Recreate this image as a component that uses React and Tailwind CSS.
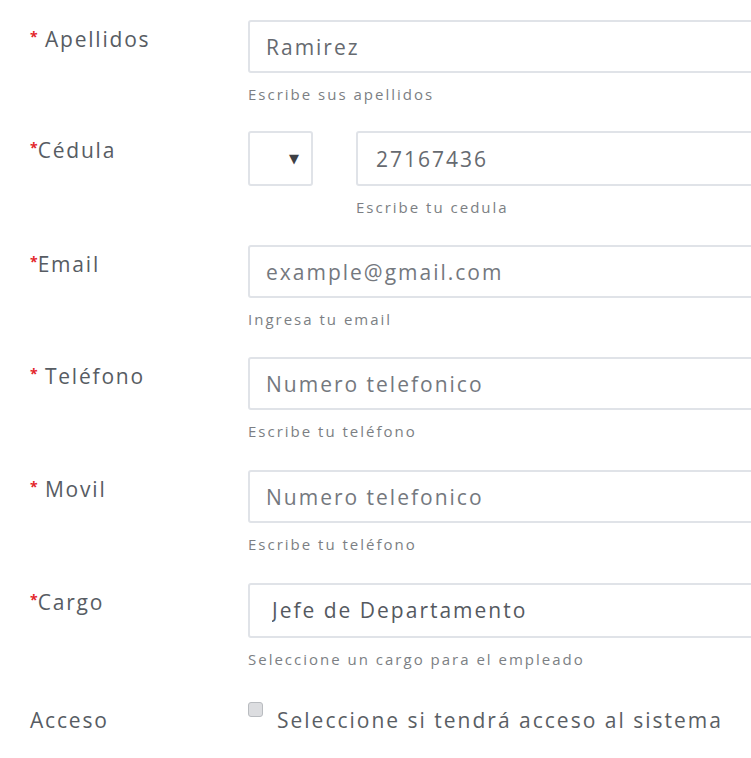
import React from 'react';

const font = { fontFamily: '"Open Sans", "DejaVu Sans", sans-serif' };

function Label({ text, required, spaced }) {
  return (
    <div className="w-[218px] shrink-0 pt-[5px] text-[21px] leading-[28px] tracking-[1.8px] text-[#575c63]">
      {required && (
        <span className="relative top-[-5px] text-[14px] font-bold text-[#e3262b] tracking-normal">*</span>
      )}
      {spaced ? ' ' : ''}
      {text}
    </div>
  );
}

function Help({ children }) {
  return (
    <div className="mt-[11px] text-[15px] leading-[21px] tracking-[2px] text-[#7c7f84]">{children}</div>
  );
}

const inputCls =
  'block w-full h-[53px] border-2 border-[#e0e3e8] rounded-[3px] bg-white px-[16px] text-[21px] tracking-[2px] text-[#666a70] placeholder:text-[#74787e] outline-none';

function Row({ children, className = '' }) {
  return <div className={`flex ${className}`}>{children}</div>;
}

export default function App() {
  return (
    <div className="w-[751px] h-[758px] overflow-hidden bg-white" style={font}>
      <div className="w-[800px] pl-[30px] pt-[20px]">
        <Row className="h-[111px]">
          <Label text="Apellidos" required spaced />
          <div className="flex-1">
            <input className={inputCls} defaultValue="Ramirez" readOnly />
            <Help>Escribe sus apellidos</Help>
          </div>
        </Row>

        <Row className="h-[114px]">
          <Label text="Cédula" required />
          <div className="flex-1 flex gap-[43px]">
            <div className="w-[65px] h-[55px] shrink-0 border-2 border-[#e0e3e8] rounded-[3px] flex items-center justify-end pr-[12px] text-[13px] text-[#3d4045]">
              ▼
            </div>
            <div className="flex-1">
              <input className={`${inputCls} h-[55px] px-[18px]`} defaultValue="27167436" readOnly />
              <Help>Escribe tu cedula</Help>
            </div>
          </div>
        </Row>

        <Row className="h-[112px]">
          <Label text="Email" required />
          <div className="flex-1">
            <input className={inputCls} placeholder="example@gmail.com" readOnly />
            <Help>Ingresa tu email</Help>
          </div>
        </Row>

        <Row className="h-[113px]">
          <Label text="Teléfono" required spaced />
          <div className="flex-1">
            <input className={inputCls} placeholder="Numero telefonico" readOnly />
            <Help>Escribe tu teléfono</Help>
          </div>
        </Row>

        <Row className="h-[113px]">
          <Label text="Movil" required spaced />
          <div className="flex-1">
            <input className={inputCls} placeholder="Numero telefonico" readOnly />
            <Help>Escribe tu teléfono</Help>
          </div>
        </Row>

        <Row className="h-[118px]">
          <Label text="Cargo" required />
          <div className="flex-1">
            <select className={`${inputCls} h-[55px] appearance-none px-[22px] text-[#55595f]`} defaultValue="jefe">
              <option value="jefe">Jefe de Departamento</option>
            </select>
            <Help>Seleccione un cargo para el empleado</Help>
          </div>
        </Row>

        <Row>
          <Label text="Acceso" />
          <label className="flex-1 flex items-start gap-[14px] pt-[5px] text-[21px] leading-[28px] tracking-[2px] text-[#5a5e64]">
            <span className="mt-[-4px] w-[15px] h-[15px] shrink-0 rounded-[3px] border border-[#b9bcc0] bg-[#dcdde0]" />
            Seleccione si tendrá acceso al sistema
          </label>
        </Row>
      </div>
    </div>
  );
}
